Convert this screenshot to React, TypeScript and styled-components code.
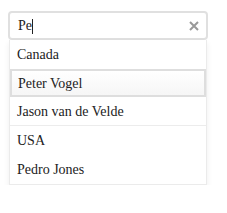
import styled, { createGlobalStyle } from 'styled-components'

const GlobalStyle = createGlobalStyle`
  body {
    margin: 0;
    background: #fff;
    font-family: "Liberation Serif", "Times New Roman", serif;
  }
`

const Page = styled.div`
  padding: 11px 0 0 8px;
`

const Combo = styled.div`
  width: 200px;
`

const InputBox = styled.div`
  box-sizing: border-box;
  height: 29px;
  display: flex;
  align-items: center;
  padding: 1px 7px 0 8px;
  border: 2px solid #e0e0e0;
  border-radius: 4px;
  background: #fff;
  font-size: 14px;
  color: #222;
`

const Value = styled.span`
  flex: 1;
  display: flex;
  align-items: center;
`

const Caret = styled.span`
  display: inline-block;
  width: 1px;
  height: 15px;
  background: #222;
`

const Clear = styled.svg`
  width: 10px;
  height: 10px;
  flex: none;
`

const Menu = styled.ul`
  box-sizing: border-box;
  list-style: none;
  margin: 0 0 0 1px;
  padding: 0;
  width: 198px;
  border: 1px solid #ebebeb;
  border-top: none;
  background: #fff;
  box-shadow: 0 3px 6px rgba(0, 0, 0, 0.07);
`

const Item = styled.li<{ $active?: boolean; $divider?: boolean }>`
  box-sizing: border-box;
  height: ${({ $active }) => ($active ? '28px' : '29px')};
  display: flex;
  align-items: center;
  padding: 1px 0 0 ${({ $active }) => ($active ? '6px' : '7px')};
  font-size: 14px;
  color: #222;
  border: ${({ $active }) => ($active ? '2px solid #dedede' : 'none')};
  border-bottom: ${({ $active, $divider }) =>
    $active ? '2px solid #dedede' : $divider ? '1px solid #ececec' : 'none'};
  background: ${({ $active }) => ($active ? 'linear-gradient(#fff, #f6f6f6)' : '#fff')};
`

const options = [
  { label: 'Canada' },
  { label: 'Peter Vogel', active: true },
  { label: 'Jason van de Velde', divider: true },
  { label: 'USA' },
  { label: 'Pedro Jones' },
]

const App = () => {
  return (
    <Page>
      <GlobalStyle />
      <Combo>
        <InputBox>
          <Value>
            Pe
            <Caret />
          </Value>
          <Clear viewBox="0 0 10 10">
            <path d="M1 1L9 9M9 1L1 9" stroke="#999" strokeWidth="2" />
          </Clear>
        </InputBox>
        <Menu>
          {options.map(option => (
            <Item key={option.label} $active={option.active} $divider={option.divider}>
              {option.label}
            </Item>
          ))}
        </Menu>
      </Combo>
    </Page>
  )
}

export default App
